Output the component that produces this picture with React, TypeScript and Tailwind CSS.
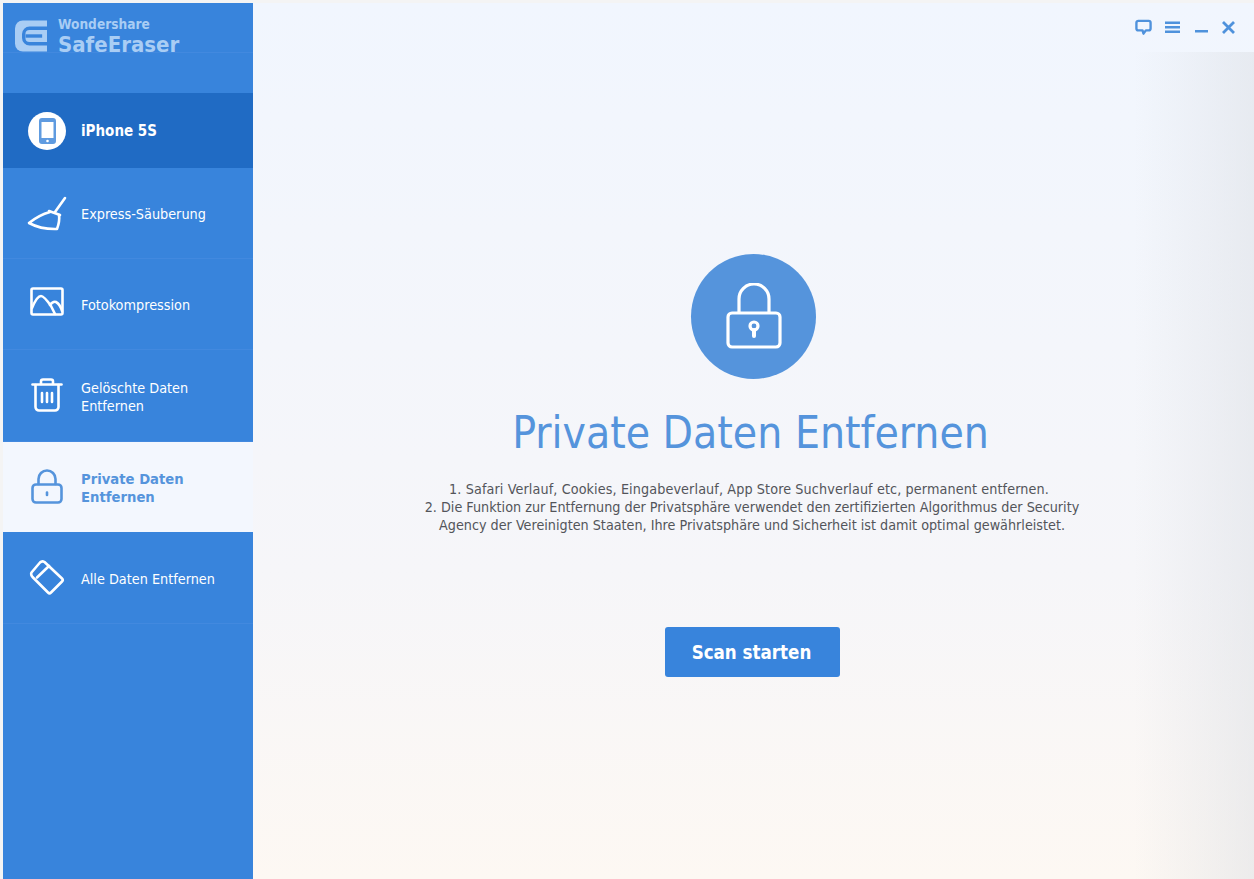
import React from "react";

const font = "font-['DejaVu_Sans_Condensed','DejaVu_Sans',sans-serif]";

function Row({ h, icon, label, active, line = true }: { h: string; icon: React.ReactNode; label: React.ReactNode; active?: boolean; line?: boolean }) {
  return (
    <div className={`${h} flex items-center pl-[24px] ${active ? "bg-[#f3f7fe] text-[#5594dc] font-bold text-[14.7px]" : "text-white text-[14.3px]"} ${line && !active ? "border-b border-[#4289df]" : ""}`}>
      <div className="w-[40px] h-[40px] flex items-center justify-center shrink-0">{icon}</div>
      <div className="ml-[14px] pt-[2px] leading-[18px]">{label}</div>
    </div>
  );
}

const stroke = { fill: "none", stroke: "currentColor", strokeWidth: 2.6, strokeLinecap: "round" as const, strokeLinejoin: "round" as const };

export default function App() {
  return (
    <div className={`${font} relative w-[1254px] h-[879px] overflow-hidden bg-[#f4f4f4] pl-[3px] pt-[3px] flex`}>
      <aside className="w-[250px] h-[876px] shrink-0 bg-[#3884dc] flex flex-col">
        <div className="h-[50px] border-b border-[#4289df] flex items-start pl-[12px] pt-[17px]">
          <svg width="32" height="32" viewBox="0 0 33 32" className="shrink-0">
            <path d="M8 0h25v32H8a8 8 0 0 1-8-8V8a8 8 0 0 1 8-8z" fill="#a9cdf4" />
            <path d="M33 8H15a6 6 0 0 0-6 6v4a6 6 0 0 0 6 6h18" fill="none" stroke="#3884dc" strokeWidth="3.500" />
            <path d="M11 16h17" stroke="#3884dc" strokeWidth="3.500" />
          </svg>
          <div className="ml-[11px] -mt-[4px] text-[#a9cdf4] font-bold">
            <div className="text-[13.6px] leading-[16px]">Wondershare</div>
            <div className="text-[22px] leading-[25px]">SafeEraser</div>
          </div>
        </div>
        <div className="h-[40px]" />
        <div className="h-[75px] bg-[#206bc4] flex items-center pl-[25px]">
          <div className="w-[38px] h-[38px] rounded-full bg-white flex items-center justify-center">
            <svg width="17" height="26" viewBox="0 0 17 26">
              <path fillRule="evenodd" d="M3 0h11a3 3 0 0 1 3 3v20a3 3 0 0 1-3 3H3a3 3 0 0 1-3-3V3a3 3 0 0 1 3-3zM2.500 4v16h12V4z" fill="#5f9be0" />
              <circle cx="8.500" cy="23" r="1.300" fill="#fff" />
            </svg>
          </div>
          <div className="ml-[15px] pt-[2px] text-[15px] font-bold text-white">iPhone 5S</div>
        </div>
        <Row h="h-[91px]" label="Express-Säuberung" icon={
          <svg width="40" height="40" viewBox="0 0 40 40" {...stroke}>
            <path d="M38 5 L28 19" />
            <path d="M22 18 L33 22" />
            <path d="M23 19 Q12 22 2 30 Q14 36.500 30 36 Q33 28 32 22" />
          </svg>
        } />
        <Row h="h-[91px]" label="Fotokompression" icon={
          <svg width="34" height="30" viewBox="0 0 34 30" {...stroke} className="-mt-[4px]">
            <rect x="1.500" y="1.500" width="31" height="26" rx="1.500" />
            <path d="M2 21 Q7 9 11 9 Q14 9 21 19 L25 27" />
            <path d="M20 18 Q23 14 26 15 Q30 17 32 24" />
          </svg>
        } />
        <Row h="h-[92px]" label={<>Gelöschte Daten<br />Entfernen</>} icon={
          <svg width="32" height="34" viewBox="0 0 32 34" {...stroke} className="-mt-[2px]">
            <path d="M1.500 6.500h29" />
            <path d="M10 6V3.500a2 2 0 0 1 2-2h8a2 2 0 0 1 2 2V6" />
            <path d="M4.500 7v22a3.500 3.500 0 0 0 3.500 3.500h16a3.500 3.500 0 0 0 3.500-3.500V7" />
            <path d="M11 15v9M16 15v9M21 15v9" />
          </svg>
        } />
        <Row h="h-[90px]" active label={<>Private Daten<br />Entfernen</>} icon={
          <svg width="32" height="35" viewBox="0 0 32 35" {...stroke} className="-mt-[2px]">
            <rect x="1.500" y="15.500" width="29" height="18" rx="3.500" />
            <path d="M7.500 15V10a8.500 8.500 0 0 1 17 0v5" />
            <path d="M16 23.500v2.500" />
          </svg>
        } />
        <Row h="h-[92px]" label="Alle Daten Entfernen" icon={
          <svg width="36" height="36" viewBox="0 0 36 36" {...stroke} className="-mt-[2px]">
            <path d="M2.500 13.500 L11 3.500 Q13 1.500 15.500 3 L33 19.500 Q34.500 21 33 22.500 L22 33.500 Q20.500 35 19 33.500 L3.500 18 Q1.500 15.500 2.500 13.500 Z" />
            <path d="M8 18.500 L20 7" />
          </svg>
        } />
      </aside>

      <main className="flex-1 h-[876px] bg-gradient-to-b from-[#f1f6fe] via-[#f6f6f9] via-65% to-[#fdf8f3] flex flex-col items-center pt-[251px] relative">
        <div className="absolute right-0 top-[49px] bottom-0 w-[120px] bg-gradient-to-r from-[#dfe2e8]/0 to-[#dcdfe4]/50 pointer-events-none" />
        <div className="absolute right-[19px] top-[16px] flex items-center text-[#4f92dc]">
          <svg width="17" height="17" viewBox="0 0 18 17" {...stroke} strokeWidth="2.500">
            <path d="M3.500 1.500h11a2 2 0 0 1 2 2v6a2 2 0 0 1-2 2h-3L9 15l-1-3.500H3.500a2 2 0 0 1-2-2v-6a2 2 0 0 1 2-2z" />
          </svg>
          <svg width="15" height="13" viewBox="0 0 15 13" className="ml-[13px]" fill="currentColor">
            <rect width="15" height="2.500" y="0.500" /><rect width="15" height="2.500" y="5" /><rect width="15" height="2.500" y="9.500" />
          </svg>
          <svg width="13" height="13" viewBox="0 0 13 13" className="ml-[15px]" fill="currentColor">
            <rect width="13" height="2.500" y="9" />
          </svg>
          <svg width="13" height="13" viewBox="0 0 13 13" className="ml-[14px]" stroke="currentColor" strokeWidth="2.800">
            <path d="M1 1l11 11M12 1L1 12" />
          </svg>
        </div>
        <div className="w-[125px] h-[125px] rounded-full bg-[#5594dc] flex items-center justify-center">
          <svg width="56" height="66" viewBox="0 0 56 66" fill="none" stroke="#fff" strokeWidth="3.200" strokeLinecap="round" strokeLinejoin="round" className="-mt-[2px]">
            <rect x="2" y="30" width="52" height="34" rx="4" />
            <path d="M13 29V16a15 15 0 0 1 30 0v13" />
            <circle cx="28" cy="43" r="4" />
            <path d="M28 47v6" strokeWidth="4" />
          </svg>
        </div>
        <h1 className="mt-[24px] mr-[6px] text-[44px] leading-[60px] font-normal text-[#5594dc]">Private Daten Entfernen</h1>
        <p className="mt-[17px] mr-[3px] w-[680px] text-center text-[14.24px] leading-[18px] text-[#53555a]">
          <span className="tracking-[0.11px] mr-[6px]">1. Safari Verlauf, Cookies, Eingabeverlauf, App Store Suchverlauf etc, permanent entfernen.</span><br />
          2. Die Funktion zur Entfernung der Privatsphäre verwendet den zertifizierten Algorithmus der Security<br />
          Agency der Vereinigten Staaten, Ihre Privatsphäre und Sicherheit ist damit optimal gewährleistet.
        </p>
        <button className="mt-[93px] mr-[2px] w-[175px] h-[50px] rounded-[3px] bg-[#3884dc] pt-[2px] pr-[2px] text-white font-bold text-[18.6px]">Scan starten</button>
      </main>
    </div>
  );
}
